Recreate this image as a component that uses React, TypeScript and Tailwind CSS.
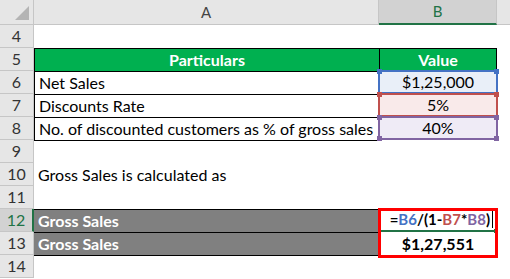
import type { ReactNode } from 'react'

const font = { fontFamily: 'Lato, "Liberation Sans", sans-serif' }

function RowNum({ n, active }: { n: number; active?: boolean }) {
  return (
    <div
      className={
        active
          ? 'w-[34px] shrink-0 h-full flex items-center justify-center bg-[#d2d2d2] text-[#217346] border-b border-[#c6c6c6] border-r-2 border-r-[#217346]'
          : 'w-[34px] shrink-0 h-full flex items-center justify-center bg-[#e6e6e6] text-[#333] border-b border-r border-[#c6c6c6]'
      }
    >
      {n}
    </div>
  )
}

function Row({ n, a, b, active }: { n: number; a?: ReactNode; b?: ReactNode; active?: boolean }) {
  return (
    <div className="flex h-[23px]">
      <RowNum n={n} active={active} />
      {a ?? <div className="w-[345px] shrink-0" />}
      {b ?? <div className="w-[118px] shrink-0" />}
      <div className="flex-1" />
    </div>
  )
}

// B cell referenced by the formula: coloured border, tinted fill, corner handles
function RefCell({ children, border, fill, dot, last }: { children: ReactNode; border: string; fill: string; dot: string; last?: boolean }) {
  return (
    <div className={`relative w-[120px] -ml-px -mr-px -mt-px h-[24px] shrink-0 border-2 flex items-center justify-center ${border} ${fill}`}>
      {children}
      <span className={`absolute -left-[3px] -top-[3px] w-[5px] h-[5px] ${dot}`} />
      <span className={`absolute -right-[3px] -top-[3px] w-[5px] h-[5px] ${dot}`} />
      {last && <span className={`absolute -left-[3px] -bottom-[3px] w-[5px] h-[5px] ${dot}`} />}
      {last && <span className={`absolute -right-[3px] -bottom-[3px] w-[5px] h-[5px] ${dot}`} />}
    </div>
  )
}

export default function App() {
  return (
    <div className="relative w-[510px] h-[279px] bg-white overflow-hidden text-[16px] text-black" style={font}>
      {/* column headers */}
      <div className="flex h-[25px] text-[15px]">
        <div className="relative w-[34px] shrink-0 bg-[#e6e6e6] border-b border-r border-[#c6c6c6]">
          <div className="absolute right-[4px] bottom-[4px] w-0 h-0 border-l-[14px] border-l-transparent border-b-[14px] border-b-[#b4b4b4]" />
        </div>
        <div className="w-[345px] shrink-0 bg-[#e6e6e6] border-b border-r border-[#c6c6c6] flex items-center justify-center text-[#444]">
          A
        </div>
        <div className="w-[118px] shrink-0 bg-[#d2d2d2] border-b-2 border-[#217346] border-r border-r-[#c6c6c6] flex items-center justify-center text-[#217346]">
          B
        </div>
        <div className="flex-1 bg-[#e6e6e6] border-b border-[#c6c6c6]" />
      </div>

      <Row n={4} />
      <Row
        n={5}
        a={
          <div className="w-[345px] shrink-0 bg-[#00b050] border-t border-l border-black flex items-center justify-center font-bold text-white">
            Particulars
          </div>
        }
        b={
          <div className="w-[118px] shrink-0 bg-[#00b050] border-t border-x border-black flex items-center justify-center font-bold text-white">
            Value
          </div>
        }
      />
      <Row
        n={6}
        a={<div className="w-[345px] shrink-0 border-t border-l border-black flex items-center pl-[4px]">Net Sales</div>}
        b={
          <RefCell border="border-[#4472c4]" fill="bg-[#e9eff8]" dot="bg-[#4472c4]">
            $1,25,000
          </RefCell>
        }
      />
      <Row
        n={7}
        a={<div className="w-[345px] shrink-0 border-t border-l border-black flex items-center pl-[4px]">Discounts Rate</div>}
        b={
          <RefCell border="border-[#c0504d]" fill="bg-[#f9eaea]" dot="bg-[#c0504d]">
            5%
          </RefCell>
        }
      />
      <Row
        n={8}
        a={
          <div className="w-[345px] shrink-0 border-t border-l border-black flex items-center pl-[4px] whitespace-nowrap">
            No. of discounted customers as % of gross sales
          </div>
        }
        b={
          <RefCell border="border-[#8064a2]" fill="bg-[#efebf6]" dot="bg-[#8064a2]" last>
            40%
          </RefCell>
        }
      />
      <Row n={9} a={<div className="w-[345px] shrink-0 border-t border-black" />} />
      <Row n={10} a={<div className="w-[345px] shrink-0 flex items-center pl-[4px] whitespace-nowrap">Gross Sales is calculated as</div>} />
      <Row n={11} />

      {/* formula and result, framed in red */}
      <div className="relative">
        <Row
          n={12}
          active
          a={<div className="w-[345px] shrink-0 bg-[#808080] border-t border-black flex items-center pl-[4px] font-bold text-white">Gross Sales</div>}
          b={
            <div className="relative w-[118px] shrink-0 border-b-2 border-[#217346] flex items-center justify-end pr-[4px] font-bold text-[15px]">
              <span>=</span>
              <span className="text-[#4472c4]">B6</span>
              <span>/(1-</span>
              <span className="text-[#c0504d]">B7</span>
              <span>*</span>
              <span className="text-[#8064a2]">B8</span>
              <span>)</span>
              <span className="ml-[2px] w-px h-[17px] bg-black" />
              <span className="absolute -right-[1px] -bottom-[3px] w-[4px] h-[4px] bg-[#217346]" />
            </div>
          }
        />
        <Row
          n={13}
          a={<div className="w-[345px] shrink-0 bg-[#808080] border-t border-black flex items-center pl-[4px] font-bold text-white">Gross Sales</div>}
          b={<div className="w-[118px] shrink-0 flex items-center justify-center font-bold">$1,27,551</div>}
        />
        <div className="absolute left-[378px] -top-px w-[120px] h-[50px] border-[3px] border-[#ff0000]" />
      </div>
      <Row n={14} a={<div className="w-[345px] shrink-0 border-t border-black" />} />
    </div>
  )
}
